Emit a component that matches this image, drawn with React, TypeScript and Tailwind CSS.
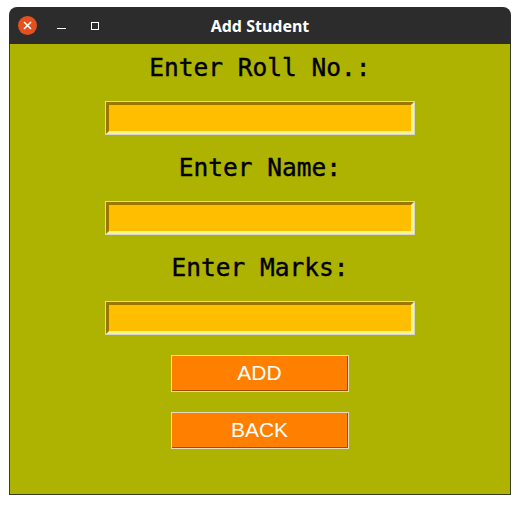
import React from "react";

function Field({ label }: { label: string }) {
    return (
        <div className="flex flex-col items-center gap-[19px]">
            <span className="h-[28px] leading-[28px] text-[24.5px] text-black font-['DejaVu_Sans_Mono',monospace] [-webkit-text-stroke:0.4px_black]">
                {label}
            </span>
            <div className="w-[310px] h-[34px] border border-[#d6d6d0]">
                <div className="w-full h-full bg-[#ffbf00] border-[3px] border-t-[#9c7800] border-l-[#9c7800] border-b-[#fff680] border-r-[#fff680]" />
            </div>
        </div>
    );
}

function Button({ text }: { text: string }) {
    return (
        <button className="w-[178px] h-[37px] border border-[#e6dcbc] cursor-pointer">
            <div className="w-full h-full bg-[#ff8000] border-b border-r border-[#a44a00] flex items-center justify-center text-white text-[21px] font-['Liberation_Sans',sans-serif]">
                {text}
            </div>
        </button>
    );
}

export default function App() {
    return (
        <div className="w-[520px] h-[505px] bg-white pt-[7px] pl-[9px]">
            <div className="w-[502px] flex flex-col">
                <div className="h-[37px] bg-[#2c2c2c] rounded-t-[8px] flex items-center px-[9px] relative">
                    <div className="w-[19px] h-[19px] rounded-full bg-[#e4501e] flex items-center justify-center">
                        <svg width="9" height="9" viewBox="0 0 9 9">
                            <path d="M1 1L8 8M8 1L1 8" stroke="white" strokeWidth="1.6" />
                        </svg>
                    </div>
                    <div className="ml-[20px] w-[9px] h-[1px] bg-white mt-[6px]" />
                    <div className="ml-[25px] w-[8px] h-[8px] border border-white" />
                    <span className="absolute left-0 right-0 text-center text-white font-bold text-[16px] font-['Noto_Sans',sans-serif] pointer-events-none">
                        Add Student
                    </span>
                </div>
                <div className="h-[451px] bg-[#adb300] border-l border-r border-b border-[#3b3b2a] flex flex-col items-center pt-[10px]">
                    <div className="flex flex-col gap-[19px]">
                        <Field label="Enter Roll No.:" />
                        <Field label="Enter Name:" />
                        <Field label="Enter Marks:" />
                    </div>
                    <div className="flex flex-col gap-[20px] mt-[20px]">
                        <Button text="ADD" />
                        <Button text="BACK" />
                    </div>
                </div>
            </div>
        </div>
    );
}
